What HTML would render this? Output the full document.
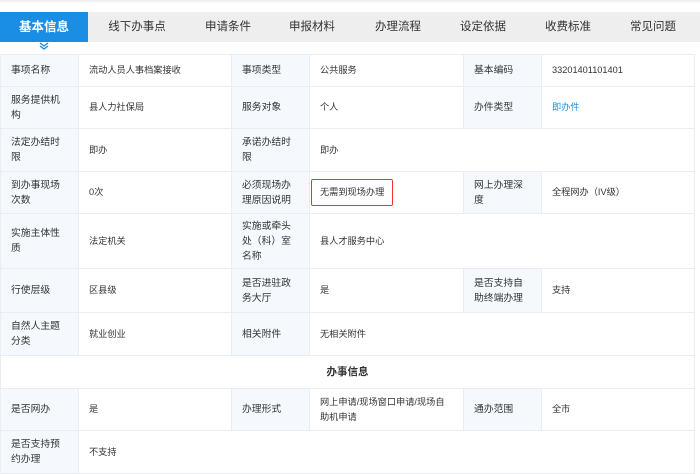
<!DOCTYPE html>
<html><head><meta charset="utf-8"><style>
*{margin:0;padding:0;box-sizing:border-box}
body{width:700px;height:473px;background:#fff;font-family:"Liberation Sans","Noto Sans CJK SC",sans-serif;overflow:hidden;position:relative;color:#333}
.top{position:absolute;left:0;top:0;width:700px;height:4px;background:linear-gradient(#eee,#fff)}
.tabs{position:absolute;left:0;top:12px;width:700px;height:30px;background:#eeeeee}
.tab{position:absolute;top:0;width:80px;margin-left:-40px;font-size:11.5px;line-height:30px;text-align:center;color:#333}
.tab.a{left:0;margin-left:0;width:88px;background:#1a8ee5;color:#fff;font-weight:bold;font-size:12.5px}
.chev{position:absolute;left:39px;top:42px}
table{position:absolute;left:0;top:54px;width:694px;border-collapse:collapse;table-layout:fixed}
td{border:1px solid #e9eef3;font-size:9.2px;line-height:15px;padding:0 10px;vertical-align:middle;color:#333}
td.l{background:#f5f9fd;font-size:9.8px;padding:0 16px 0 10px}
.blue{color:#1a8ee5}
.red{display:inline-block;border:1.5px solid #e33;border-radius:2px;padding:5px 8px;margin-left:-9px}
</style></head><body>
<div class="top"></div>
<div class="tabs">
<div class="tab a">基本信息</div>
<div class="tab" style="left:137px">线下办事点</div>
<div class="tab" style="left:228px">申请条件</div>
<div class="tab" style="left:312px">申报材料</div>
<div class="tab" style="left:398px">办理流程</div>
<div class="tab" style="left:483px">设定依据</div>
<div class="tab" style="left:568px">收费标准</div>
<div class="tab" style="left:653px">常见问题</div>
</div>
<svg class="chev" width="10" height="8" viewBox="0 0 10 8"><path d="M1 1L5 4L9 1M1 4L5 7L9 4" stroke="#1a8ee5" stroke-width="1.4" fill="none"/></svg>
<table>
<colgroup><col style="width:78px"><col style="width:153px"><col style="width:78px"><col style="width:154px"><col style="width:78px"><col style="width:153px"></colgroup>
<tr style="height:32px"><td class="l">事项名称</td><td>流动人员人事档案接收</td><td class="l">事项类型</td><td>公共服务</td><td class="l">基本编码</td><td>33201401101401</td></tr>
<tr style="height:42px"><td class="l">服务提供机构</td><td>县人力社保局</td><td class="l">服务对象</td><td>个人</td><td class="l">办件类型</td><td class="blue">即办件</td></tr>
<tr style="height:43px"><td class="l">法定办结时限</td><td>即办</td><td class="l">承诺办结时限</td><td colspan="3">即办</td></tr>
<tr style="height:42px"><td class="l">到办事现场次数</td><td>0次</td><td class="l">必须现场办理原因说明</td><td><span class="red">无需到现场办理</span></td><td class="l">网上办理深度</td><td>全程网办（IV级）</td></tr>
<tr style="height:55px"><td class="l">实施主体性质</td><td>法定机关</td><td class="l">实施或牵头处（科）室名称</td><td colspan="3">县人才服务中心</td></tr>
<tr style="height:44px"><td class="l">行使层级</td><td>区县级</td><td class="l">是否进驻政务大厅</td><td>是</td><td class="l">是否支持自助终端办理</td><td>支持</td></tr>
<tr style="height:43px"><td class="l">自然人主题分类</td><td>就业创业</td><td class="l">相关附件</td><td colspan="3">无相关附件</td></tr>
<tr style="height:33px"><td colspan="6" style="text-align:center;font-weight:bold;font-size:10.5px">办事信息</td></tr>
<tr style="height:42px"><td class="l">是否网办</td><td>是</td><td class="l">办理形式</td><td>网上申请/现场窗口申请/现场自助机申请</td><td class="l">通办范围</td><td>全市</td></tr>
<tr style="height:43px"><td class="l">是否支持预约办理</td><td colspan="5">不支持</td></tr>
</table>
</body></html>
